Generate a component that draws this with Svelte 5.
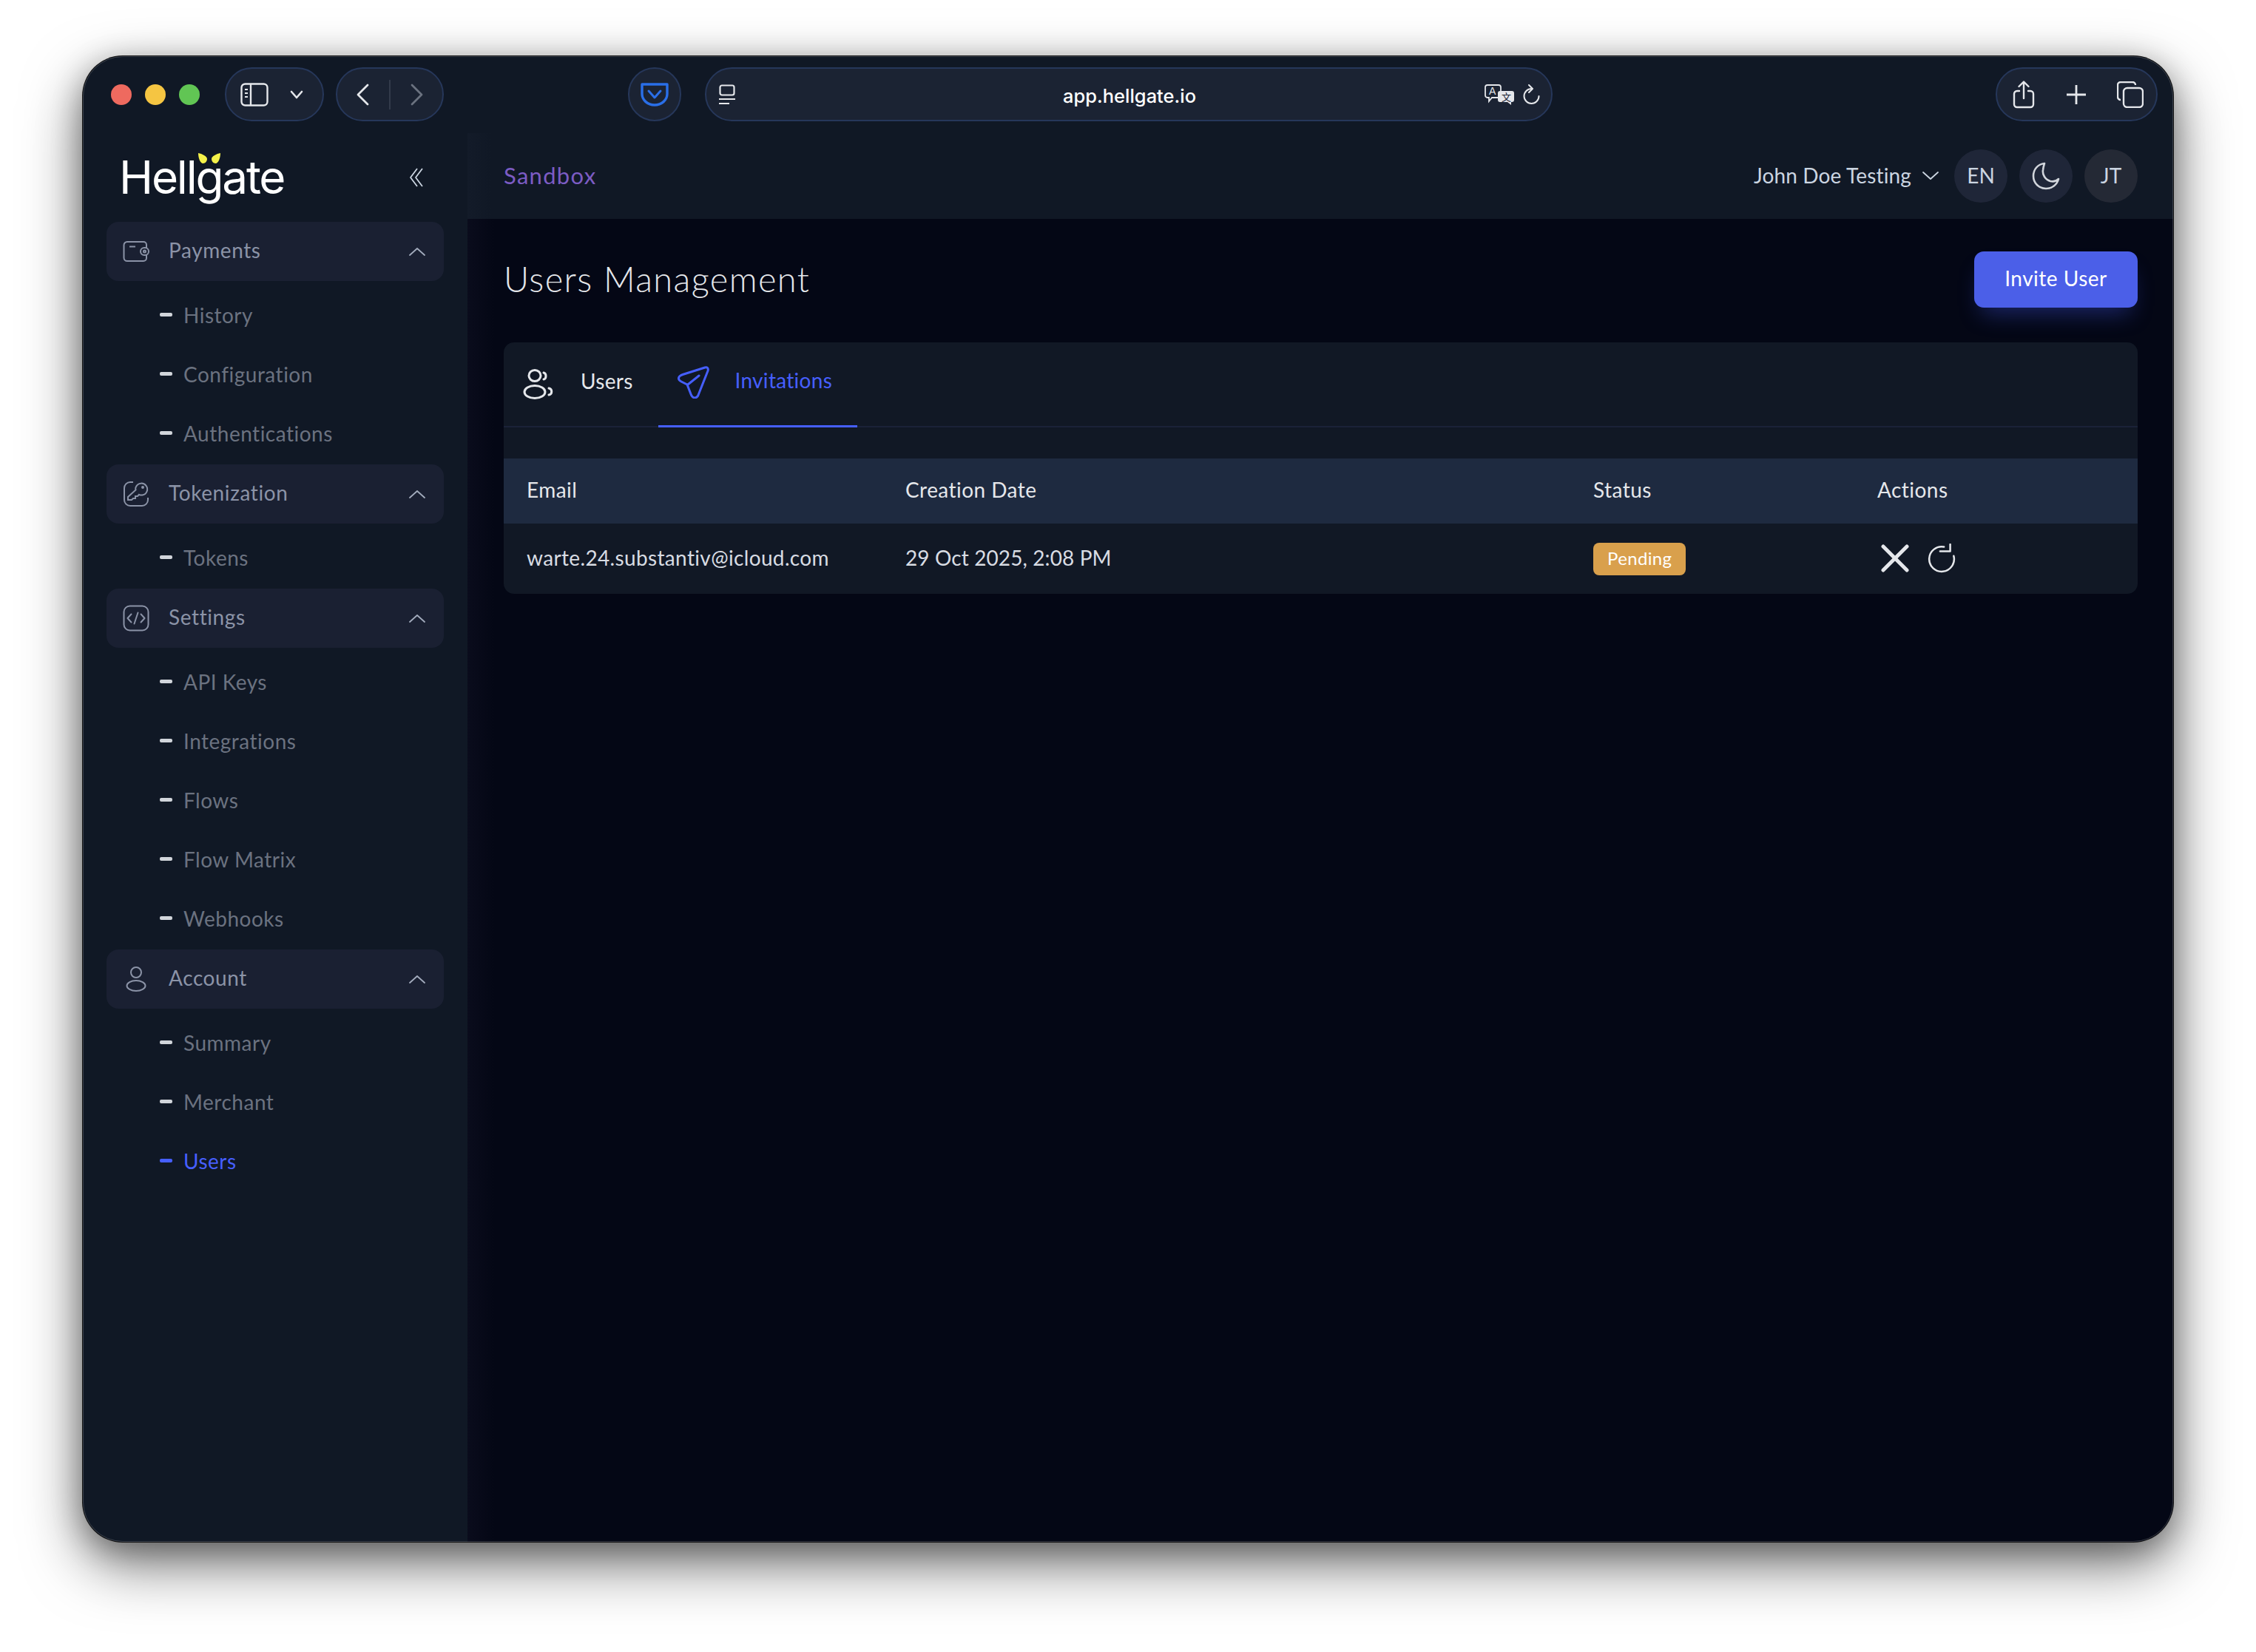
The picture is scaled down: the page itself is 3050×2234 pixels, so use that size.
<script lang="ts">
  type Group = { label: string; icon: string; items: string[] };

  const groups: Group[] = [
    { label: "Payments", icon: "wallet", items: ["History", "Configuration", "Authentications"] },
    { label: "Tokenization", icon: "key", items: ["Tokens"] },
    { label: "Settings", icon: "code", items: ["API Keys", "Integrations", "Flows", "Flow Matrix", "Webhooks"] },
    { label: "Account", icon: "person", items: ["Summary", "Merchant", "Users"] },
  ];
</script>

{#snippet groupIcon(name: string)}
  {#if name === "wallet"}
    <svg width="36" height="30" viewBox="0 0 36 30" fill="none" stroke="currentColor" stroke-width="2">
      <path d="M32 10V6a4 4 0 0 0-4-4H6a4.500 4.500 0 0 0-4.500 4.500v17A4.500 4.500 0 0 0 6 28h22a4 4 0 0 0 4-4v-4" />
      <path d="M9 8.500h8" />
      <rect x="24" y="10" width="11" height="10" rx="5" />
      <circle cx="29.500" cy="15" r="1.500" />
    </svg>
  {:else if name === "key"}
    <svg width="36" height="36" viewBox="0 0 36 36" fill="none" stroke="currentColor" stroke-width="2">
      <path d="M14 2H10a8 8 0 0 0-8 8v16a8 8 0 0 0 8 8h16a8 8 0 0 0 8-8v-3" />
      <path d="M18 8a8 8 0 1 1 8.500 11.500c-1.500.3-3 0-4.500-.7l-2 2.200h-3v3h-3l-2 2H7v-4l10.500-9.500C17 11 17 9.500 18 8z" />
      <circle cx="27" cy="9" r="1" />
    </svg>
  {:else if name === "code"}
    <svg width="36" height="36" viewBox="0 0 36 36" fill="none" stroke="currentColor" stroke-width="2">
      <rect x="1.500" y="1.500" width="33" height="33" rx="8" />
      <path d="M11.500 12.500 6.500 18l5 5.500M24.500 12.500l5 5.500-5 5.500M20.500 10.500l-5 15" stroke-linecap="round" stroke-linejoin="round" />
    </svg>
  {:else}
    <svg width="36" height="34" viewBox="0 0 36 34" fill="none" stroke="currentColor" stroke-width="2">
      <circle cx="18" cy="8" r="7" />
      <ellipse cx="18" cy="26" rx="12.500" ry="7" />
    </svg>
  {/if}
{/snippet}

{#snippet chevronUp()}
  <svg class="chev" width="22" height="12" viewBox="0 0 22 12" fill="none" stroke="currentColor" stroke-width="1.800">
    <path d="M1 11 11 2l10 9" stroke-linecap="round" stroke-linejoin="round" />
  </svg>
{/snippet}

<div class="page">
  <div class="window">
    <header class="titlebar">
      <div class="lights">
        <span class="light red"></span>
        <span class="light yellow"></span>
        <span class="light green"></span>
      </div>

      <div class="pill side-pill">
        <svg width="38" height="32" viewBox="0 0 38 32" fill="none" stroke="#e5e7eb" stroke-width="2.400">
          <rect x="1.500" y="1.500" width="35" height="29" rx="5" />
          <path d="M14 2v28" />
          <path d="M6 9h4M6 14h4M6 19h4" stroke-width="2" />
        </svg>
        <svg width="18" height="12" viewBox="0 0 18 12" fill="none" stroke="#e5e7eb" stroke-width="2.600">
          <path d="m2 2 7 8 7-8" stroke-linecap="round" stroke-linejoin="round" />
        </svg>
      </div>

      <div class="pill nav-pill">
        <svg width="18" height="30" viewBox="0 0 18 30" fill="none" stroke="#e5e7eb" stroke-width="2.800">
          <path d="M16 2 3 15l13 13" stroke-linecap="round" stroke-linejoin="round" />
        </svg>
        <span class="divider"></span>
        <svg width="18" height="30" viewBox="0 0 18 30" fill="none" stroke="#6b7280" stroke-width="2.800">
          <path d="m2 2 13 13L2 28" stroke-linecap="round" stroke-linejoin="round" />
        </svg>
      </div>

      <div class="pill pocket">
        <svg width="38" height="32" viewBox="0 0 38 32" fill="none" stroke="#2a6fe8" stroke-width="3.400">
          <path d="M2 2h34v13a17 15 0 0 1-34 0z" stroke-linejoin="round" />
          <path d="m11 11 8 9 8-9" stroke-width="3" stroke-linecap="round" stroke-linejoin="round" />
        </svg>
      </div>

      <div class="pill url">
        <svg width="22" height="28" viewBox="0 0 22 28" fill="none" stroke="#e5e7eb" stroke-width="2.200">
          <rect x="1.500" y="1.500" width="19" height="13" rx="2.500" />
          <path d="M0 20h22M0 26h14" />
        </svg>
        <span class="url-text">app.hellgate.io</span>
        <svg class="translate" width="40" height="28" viewBox="0 0 40 28">
          <path d="M4 1h15a3 3 0 0 1 3 3v11a3 3 0 0 1-3 3h-9l-4 5v-5H4a3 3 0 0 1-3-3V4a3 3 0 0 1 3-3z" fill="none" stroke="#e5e7eb" stroke-width="1.800" />
          <text x="6" y="14" class="tr-a">A</text>
          <path d="M21 9h16a3 3 0 0 1 3 3v9a3 3 0 0 1-3 3h-1v4l-5-4H21a3 3 0 0 1-3-3v-9a3 3 0 0 1 3-3z" fill="#e5e7eb" />
          <text x="23" y="22" class="tr-b">文</text>
        </svg>
        <svg class="reload" width="24" height="28" viewBox="0 0 24 28" fill="none" stroke="#e5e7eb" stroke-width="2">
          <path d="M11.500 6A10 10 0 1 0 21.500 16" stroke-linecap="round" />
          <path d="m8 1 5 5-5 5" stroke-linecap="round" stroke-linejoin="round" />
        </svg>
      </div>

      <div class="pill actions-pill">
        <svg width="30" height="38" viewBox="0 0 30 38" fill="none" stroke="#e5e7eb" stroke-width="2.400">
          <path d="M9 14H6a4 4 0 0 0-4 4v14a4 4 0 0 0 4 4h18a4 4 0 0 0 4-4V18a4 4 0 0 0-4-4h-3" stroke-linecap="round" />
          <path d="M15 24V2M8.500 8 15 1.500 21.500 8" stroke-linecap="round" stroke-linejoin="round" />
        </svg>
        <svg width="26" height="28" viewBox="0 0 26 28" fill="none" stroke="#e5e7eb" stroke-width="2.800">
          <path d="M13 1v26M0 14h26" />
        </svg>
        <svg width="36" height="36" viewBox="0 0 36 36" fill="none" stroke="#e5e7eb" stroke-width="2.400">
          <path d="M5 25a4 4 0 0 1-4-4V5a4 4 0 0 1 4-4h16a4 4 0 0 1 4 4" />
          <rect x="9" y="9" width="26" height="26" rx="5" />
        </svg>
      </div>
    </header>

    <div class="body">
      <aside class="sidebar">
        <div class="brand">
          <div class="logo">
            <svg class="eyes" width="30" height="15" viewBox="0 0 30 15">
              <path d="M0 0c5 1 12 4 12 8 0 3-2.500 6-5.500 6C3 14 0 7 0 0zM30 0c-5 1-12 4-12 8 0 3 2.500 6 5.500 6C27 14 30 7 30 0z" fill="#f5f24a" />
            </svg>
            Hellgate
          </div>
          <svg class="collapse" width="20" height="26" viewBox="0 0 20 26" fill="none" stroke="#cbd5e1" stroke-width="1.800">
            <path d="M11 1 2 13l9 12M18 1 9 13l9 12" stroke-linejoin="round" />
          </svg>
        </div>

        <nav>
          {#each groups as group}
            <div class="group">
              <div class="group-head">
                <span class="group-icon">{@render groupIcon(group.icon)}</span>
                <span class="group-label">{group.label}</span>
                {@render chevronUp()}
              </div>
              <ul>
                {#each group.items as item}
                  <li class:active={item === "Users"}><span class="dash"></span>{item}</li>
                {/each}
              </ul>
            </div>
          {/each}
        </nav>
      </aside>

      <main>
        <div class="topbar">
          <span class="env">Sandbox</span>
          <div class="user">
            <span class="user-name">John Doe Testing</span>
            <svg class="user-chev" width="22" height="12" viewBox="0 0 22 12" fill="none" stroke="#cbd5e1" stroke-width="1.800">
              <path d="m1 1 10 9 10-9" stroke-linecap="round" stroke-linejoin="round" />
            </svg>
            <span class="round en"><span>EN</span></span>
            <span class="round moon">
              <svg width="38" height="38" viewBox="0 0 38 38" fill="none" stroke="#d1d5db" stroke-width="2.600">
                <path d="M17 2C8 3 2 10 2 19c0 10 8 17 17 17 8 0 15-5 17-13-3 3-7 4-11 3-7-2-11-9-10-15 .3-3 1-6 2-9z" stroke-linejoin="round" />
              </svg>
            </span>
            <span class="round jt"><span>JT</span></span>
          </div>
        </div>

        <div class="content">
          <div class="page-head">
            <h1>Users Management</h1>
            <button>Invite User</button>
          </div>

          <section class="card">
            <div class="tabs">
              <div class="tab">
                <svg width="44" height="42" viewBox="0 0 44 42" fill="none" stroke="#e5e7eb" stroke-width="3">
                  <ellipse cx="17" cy="10" rx="8" ry="7.500" />
                  <ellipse cx="17" cy="32" rx="14" ry="8.500" />
                  <path d="M29 6c4 1 4 8 0 9M36 27c5 1 5 8 0 9" stroke-linecap="round" />
                </svg>
                <span class="tab-text">Users</span>
              </div>
              <div class="tab selected">
                <svg width="44" height="44" viewBox="0 0 44 44" fill="none" stroke="#465fff" stroke-width="3">
                  <path d="M38 2 8 11.500c-7 2.500-7 7-2 9.500l8 4 5 13c2.500 6.500 8.500 6.500 10.500 0L42 6.500c1-3.500-1-5.500-4-4.500z" stroke-linejoin="round" />
                  <path d="M15 25 30 13" stroke-linecap="round" />
                </svg>
                <span class="tab-text">Invitations</span>
              </div>
            </div>

            <div class="table">
              <div class="row head">
                <span>Email</span>
                <span>Creation Date</span>
                <span>Status</span>
                <span>Actions</span>
              </div>
              <div class="row">
                <span>warte.24.substantiv@icloud.com</span>
                <span class="date">29 Oct 2025, 2:08 PM</span>
                <span class="badge-cell"><em class="badge">Pending</em></span>
                <span class="row-actions">
                  <svg width="38" height="38" viewBox="0 0 38 38" fill="none" stroke="#e5e7eb" stroke-width="5">
                    <path d="m3 3 32 32M35 3 3 35" stroke-linecap="round" />
                  </svg>
                  <svg width="38" height="40" viewBox="0 0 36 38" fill="none" stroke="#e5e7eb" stroke-width="2.400">
                    <path d="M21 4.300A16 16 0 1 0 33.500 16" stroke-linecap="round" />
                    <path d="M29 1v9H16" stroke-linecap="round" stroke-linejoin="round" />
                  </svg>
                </span>
              </div>
            </div>
          </section>
        </div>
      </main>
    </div>
  </div>
</div>

<style>
  :global(body) {
    margin: 0;
    background: #fff;
  }

  .page {
    width: 3050px;
    height: 2234px;
    box-sizing: border-box;
    padding: 76px 112px 149px;
    overflow: hidden;
    font-family: Lato, "Open Sans", sans-serif;
    color: #e5e7eb;
  }

  .window {
    height: 100%;
    display: flex;
    flex-direction: column;
    overflow: hidden;
    border-radius: 54px;
    background: #101825;
    box-shadow:
      0 0 0 1px #111,
      0 30px 80px rgba(0, 0, 0, 0.55),
      0 10px 40px rgba(0, 0, 0, 0.3);
    outline: 1px solid rgba(255, 255, 255, 0.18);
    outline-offset: -1px;
  }

  .titlebar {
    height: 104px;
    flex: none;
    display: flex;
    align-items: flex-start;
    padding: 15px 20px 0 38px;
    box-sizing: border-box;
  }

  .lights {
    height: 73px;
    display: flex;
    align-items: center;
    gap: 18px;
    margin-right: 34px;
  }

  .light {
    width: 28px;
    height: 28px;
    border-radius: 50%;
  }

  .red { background: #ee6a5f; }
  .yellow { background: #f5c542; }
  .green { background: #61c554; }

  .pill {
    height: 73px;
    box-sizing: border-box;
    display: flex;
    align-items: center;
    background: #1b2333;
    border: 2px solid #26375a;
    border-radius: 37px;
  }

  .side-pill {
    width: 134px;
    padding: 0 26px 0 19px;
    justify-content: space-between;
  }

  .nav-pill {
    width: 146px;
    margin-left: 16px;
    padding: 0 25px;
    justify-content: space-between;
  }

  .divider {
    width: 2px;
    height: 40px;
    background: #333b4b;
  }

  .pocket {
    width: 72px;
    margin-left: 249px;
    justify-content: center;
  }

  .url {
    width: 1146px;
    margin-left: 32px;
    padding: 0 14px 0 17px;
  }

  .url-text {
    flex: 1;
    text-align: center;
    font-family: Inter, sans-serif;
    font-size: 25.500px;
    font-weight: 500;
    color: #fff;
    padding-left: 53px;
    padding-top: 3px;
  }

  .translate {
    margin-right: 12px;
  }

  .tr-a {
    font-family: "Liberation Sans", sans-serif;
    font-size: 14px;
    fill: #e5e7eb;
  }

  .tr-b {
    font-family: "Noto Sans CJK SC", sans-serif;
    font-size: 13px;
    fill: #1b2333;
  }

  .actions-pill {
    width: 219px;
    margin-left: auto;
    margin-right: 1px;
    padding: 0 17px 0 21px;
    justify-content: space-between;
  }

  .body {
    flex: 1;
    display: flex;
    min-height: 0;
  }

  .sidebar {
    width: 520px;
    flex: none;
    box-sizing: border-box;
    padding: 0 32px;
  }

  .brand {
    height: 120px;
    display: flex;
    align-items: center;
    justify-content: space-between;
    padding: 0 27px 0 17px;
  }

  .logo {
    position: relative;
    font-family: Inter, sans-serif;
    font-size: 62px;
    font-weight: 400;
    letter-spacing: -2.200px;
    color: #fff;
    line-height: 1;
  }

  .eyes {
    position: absolute;
    left: 107px;
    top: -2px;
  }

  .group-head {
    height: 80px;
    display: flex;
    align-items: center;
    gap: 26px;
    padding: 0 25px 0 22px;
    background: #1a2032;
    border-radius: 16px;
    color: #8b93a7;
    font-size: 28px;
    letter-spacing: 0.6px;
  }

  .group-icon {
    display: flex;
    width: 36px;
    justify-content: center;
  }

  .group-label {
    flex: 1;
    padding-bottom: 5px;
  }

  .chev {
    color: #a3acbd;
  }

  ul {
    list-style: none;
    margin: 0;
    padding: 6px 0 2px;
  }

  li {
    height: 80px;
    box-sizing: border-box;
    display: flex;
    align-items: center;
    gap: 15px;
    padding: 0 0 1px 72px;
    font-size: 28px;
    letter-spacing: 0.5px;
    color: #6b7280;
  }

  .dash {
    width: 17px;
    height: 5px;
    border-radius: 2px;
    background: #d1d5db;
  }

  li.active {
    color: #465fff;
  }

  li.active .dash {
    background: #465fff;
  }

  main {
    flex: 1;
    min-width: 0;
    display: flex;
    flex-direction: column;
    background: linear-gradient(90deg, #0a0c1c 0, #040715 36px);
  }

  .topbar {
    height: 116px;
    flex: none;
    display: flex;
    align-items: center;
    justify-content: space-between;
    padding: 0 48px 0 49px;
    box-sizing: border-box;
    background: linear-gradient(90deg, #131b29 0, #101825 32px);
  }

  .env {
    font-size: 31px;
    letter-spacing: 1.300px;
    color: #7c5cc4;
    padding-bottom: 3px;
  }

  .user {
    display: flex;
    align-items: center;
  }

  .user-name {
    font-size: 28px;
    letter-spacing: 0.15px;
    color: #cbd5e1;
    padding-bottom: 3px;
  }

  .user-chev {
    margin: 0 21px 0 15px;
  }

  .round {
    width: 72px;
    height: 72px;
    border-radius: 50%;
    display: flex;
    align-items: center;
    justify-content: center;
    font-size: 28px;
    color: #cbd5e1;
    background: #1f2638;
  }

  .round > span {
    padding-bottom: 3px;
  }

  .moon {
    margin: 0 16px;
  }

  .jt {
    background: #242935;
  }

  .content {
    flex: 1;
    padding: 44px 48px 0 49px;
  }

  .page-head {
    display: flex;
    align-items: center;
    justify-content: space-between;
    height: 76px;
  }

  h1 {
    margin: 0;
    font-size: 47px;
    font-weight: 300;
    letter-spacing: 1.400px;
    color: #e5e7eb;
    padding-bottom: 3px;
  }

  button {
    width: 221px;
    height: 76px;
    border: none;
    border-radius: 13px;
    background: #4b5fe8;
    color: #fff;
    font-family: inherit;
    font-size: 28px;
    letter-spacing: 0.5px;
    padding: 0 0 4px;
    box-shadow: 0 18px 30px -10px rgba(70, 95, 255, 0.35);
  }

  .card {
    margin-top: 47px;
    height: 340px;
    background: #111825;
    border-radius: 14px;
    overflow: hidden;
  }

  .tabs {
    height: 115px;
    box-sizing: border-box;
    display: flex;
    border-bottom: 2px solid #1b2238;
  }

  .tab {
    display: flex;
    align-items: center;
    gap: 35px;
    padding: 0 34px 4px 25px;
    font-size: 28px;
    letter-spacing: 0.3px;
    height: 115px;
    box-sizing: border-box;
    margin-bottom: -2px;
    color: #e5e7eb;
  }

  .tab-text {
    padding-bottom: 7px;
  }

  .tab.selected {
    color: #465fff;
    border-bottom: 3px solid #465fff;
  }

  .table {
    margin-top: 42px;
  }

  .row {
    display: grid;
    grid-template-columns: 512px 930px 384px 1fr;
    align-items: center;
    height: 95px;
    font-size: 28px;
    letter-spacing: 0.35px;
    color: #d8dce3;
  }

  .row > span {
    padding: 0 0 3px 31px;
  }

  .row > .date {
    letter-spacing: 0.1px;
  }

  .row > .badge-cell,
  .row > .row-actions {
    padding-bottom: 0;
  }

  .row.head {
    height: 88px;
    background: #1e2a40;
    color: #e5e7eb;
    letter-spacing: 0.45px;
  }

  .row.head > span {
    padding-bottom: 5px;
  }

  .badge {
    display: inline-block;
    padding: 0 19px;
    height: 44px;
    line-height: 42px;
    border-radius: 8px;
    background: #d9a04c;
    color: #fff;
    font-style: normal;
    font-size: 24px;
  }

  .row > .row-actions {
    display: flex;
    align-items: center;
    gap: 25px;
    padding-left: 36px;
    padding-bottom: 2px;
  }
</style>
